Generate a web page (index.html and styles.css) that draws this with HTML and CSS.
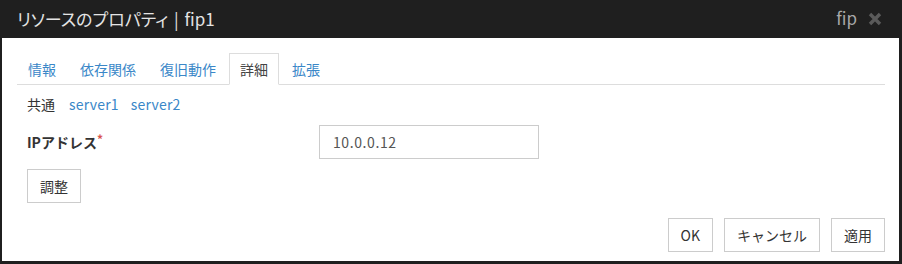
FILE: index.html
```html
<!DOCTYPE html>
<html lang="ja">
<head>
<meta charset="utf-8">
<title>リソースのプロパティ</title>
<link rel="stylesheet" href="styles.css">
</head>
<body>
<div class="dialog">
  <div class="header">
    <div class="title">リソースのプロパティ | fip1</div>
    <div class="header-right">
      <span class="type">fip</span>
      <svg class="close" width="14" height="14" viewBox="0 0 14 14"><path d="M2 2 L12 12 M12 2 L2 12" stroke="#5a5a5a" stroke-width="3.4" stroke-linecap="butt"/></svg>
    </div>
  </div>
  <div class="content">
    <ul class="tabs">
      <li class="tab"><a>情報</a></li>
      <li class="tab"><a>依存関係</a></li>
      <li class="tab"><a>復旧動作</a></li>
      <li class="tab active"><a>詳細</a></li>
      <li class="tab"><a>拡張</a></li>
    </ul>
    <div class="subtabs">
      <span class="sub current">共通</span>
      <span class="sub link">server1</span>
      <span class="sub link">server2</span>
    </div>
    <div class="field">
      <label class="label">IPアドレス<span class="req">*</span></label>
      <div class="input">10.0.0.12</div>
    </div>
    <div class="actions">
      <button class="btn">調整</button>
    </div>
    <div class="footer">
      <button class="btn">OK</button>
      <button class="btn">キャンセル</button>
      <button class="btn">適用</button>
    </div>
  </div>
</div>
</body>
</html>
```
FILE: styles.css
```css
html, body {
  margin: 0;
  padding: 0;
}
body {
  background: #1f1f1f;
  font-family: "Noto Sans CJK JP", "Noto Sans", sans-serif;
  font-size: 14px;
  color: #333;
  width: 902px;
  height: 264px;
  overflow: hidden;
}
.dialog {
  margin: 0 3px 0 2px;
}
.header {
  height: 38px;
  background: #1f1f1f;
  margin-left: -2px;
  margin-right: -3px;
  padding: 0 20px 0 17px;
  display: flex;
  align-items: center;
  justify-content: space-between;
  box-sizing: border-box;
}
.title {
  color: #e4e4e4;
  font-size: 17px;
  line-height: 24px;
  margin-top: -1px;
  word-spacing: 2px;
  font-feature-settings: "palt" 1;
}
.header-right {
  display: flex;
  align-items: center;
  gap: 11px;
}
.type {
  color: #a8a8a8;
  font-size: 17px;
  line-height: 24px;
  margin-top: -2px;
}
.close {
  display: block;
  margin-top: -1px;
}
.content {
  background: #fff;
  padding: 15px 14px 9px 15px;
  height: 223px;
  box-sizing: border-box;
}
.tabs {
  list-style: none;
  margin: 0;
  padding: 0;
  display: flex;
  border-bottom: 1px solid #ddd;
}
.tab {
  margin-right: 2px;
  margin-bottom: -1px;
}
.tab a {
  display: block;
  padding: 5px 10px;
  line-height: 20px;
  border: 1px solid transparent;
  color: #3a87c8;
}
.tab.active a {
  border-color: #ddd #ddd transparent #ddd;
  background: #fff;
  color: #444;
}
.subtabs {
  display: flex;
  margin-top: 9px;
  padding-left: 10px;
  line-height: 20px;
  gap: 12px;
}
.sub.current {
  color: #333;
  margin-right: 2px;
}
.sub.link {
  color: #3a87c8;
  letter-spacing: 0.2px;
}
.field {
  display: flex;
  align-items: center;
  margin-top: 11px;
  padding-left: 10px;
}
.label {
  width: 292px;
  font-weight: bold;
  color: #333;
  line-height: 20px;
}
.req {
  color: #d9534f;
  font-weight: bold;
  vertical-align: top;
  font-size: 12px;
  line-height: 14px;
}
.input {
  width: 220px;
  height: 34px;
  box-sizing: border-box;
  border: 1px solid #ccc;
  padding: 0 13px;
  line-height: 32px;
  color: #555;
  letter-spacing: 0.6px;
}
.actions {
  margin-top: 10px;
  padding-left: 10px;
}
.btn {
  height: 34px;
  box-sizing: border-box;
  border: 1px solid #ccc;
  background: #fff;
  padding: 0 12px;
  font-family: inherit;
  font-size: 14px;
  line-height: 32px;
  color: #333;
  border-radius: 0;
  margin: 0;
}
.footer {
  display: flex;
  justify-content: flex-end;
  gap: 11px;
  margin-top: 15px;
}
```
